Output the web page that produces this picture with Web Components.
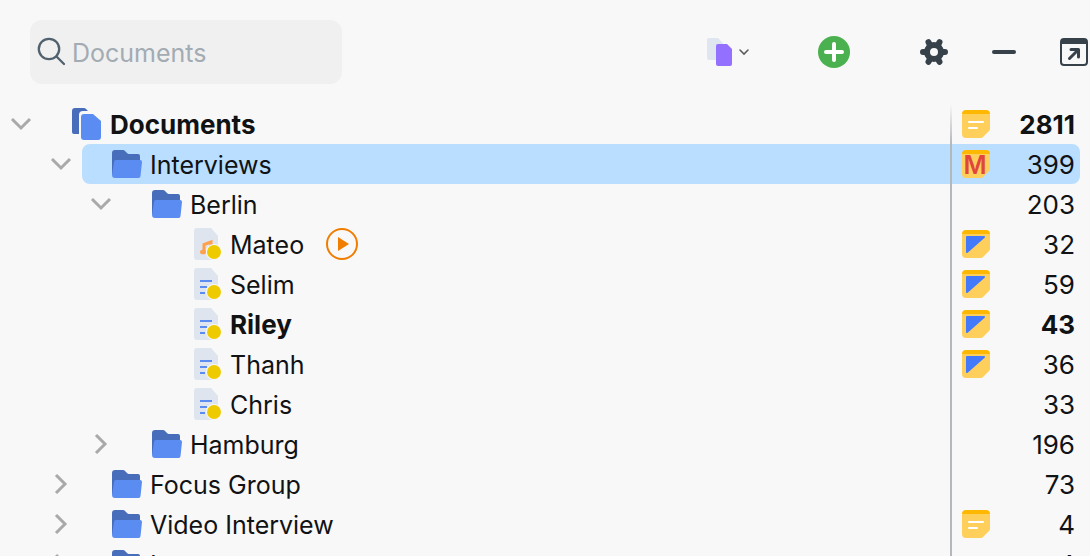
<!DOCTYPE html>
<html lang="en">
<head>
<meta charset="utf-8">
<title>Documents</title>
<style>
  html, body {
    height: 100%;
  }

  body {
    margin: 0;
    overflow: hidden;
    background: #f8f8f8;
    color: #111214;
    font-family: Inter, "Liberation Sans", sans-serif;
    font-size: 25px;
    line-height: 40px;
  }
</style>
</head>
<body>
<document-browser>
  <browser-toolbar slot="toolbar"></browser-toolbar>
  <tree-row level="0" icon="documents" state="open" memo="note" count="2811" strong>Documents</tree-row>
  <tree-row level="1" icon="folder" state="open" memo="letter" count="399" selected>Interviews</tree-row>
  <tree-row level="2" icon="folder" state="open" count="203">Berlin</tree-row>
  <tree-row level="3" icon="audio" memo="corner" count="32" playable>Mateo</tree-row>
  <tree-row level="3" icon="text" memo="corner" count="59">Selim</tree-row>
  <tree-row level="3" icon="text" memo="corner" count="43" strong>Riley</tree-row>
  <tree-row level="3" icon="text" memo="corner" count="36">Thanh</tree-row>
  <tree-row level="3" icon="text" count="33">Chris</tree-row>
  <tree-row level="2" icon="folder" state="closed" count="196">Hamburg</tree-row>
  <tree-row level="1" icon="folder" state="closed" count="73">Focus Group</tree-row>
  <tree-row level="1" icon="folder" state="closed" memo="note" count="4">Video Interview</tree-row>
  <tree-row level="1" icon="folder" state="closed" count="4">I</tree-row>
</document-browser>

<script>
const page = `<path d="M3 0H17L24 8V29a3 3 0 0 1-3 3H3a3 3 0 0 1-3-3V3a3 3 0 0 1 3-3z" fill="#dee5ef"/>`;
const dot = `<circle cx="20" cy="24" r="8" fill="#f8f8f8"/><circle cx="20" cy="24" r="7" fill="#eecb00"/>`;
const note = `
  <path d="M0 4H28V19a3 3 0 0 1-1 2L21 27a3 3 0 0 1-2 1H4a4 4 0 0 1-4-4z" fill="#ffcf5c"/>
  <path d="M0 4a4 4 0 0 1 4-4H24a4 4 0 0 1 4 4z" fill="#ffb800"/>`;

// Each icon: width, height and the shapes inside
const ICONS = {
  search: [30, 30, `<g fill="none" stroke="#52616e" stroke-width="2.3" stroke-linecap="round"><circle cx="11" cy="12" r="10.2"/><path d="M18.500 19.500L26 27"/></g>`],
  activate: [26, 28, `
    <path d="M2 0H11L16 5V20a2 2 0 0 1-2 2H2a2 2 0 0 1-2-2V2a2 2 0 0 1 2-2z" fill="#dfe6ef"/>
    <path d="M11 6H20L25 11V26a2 2 0 0 1-2 2H11a2 2 0 0 1-2-2V8a2 2 0 0 1 2-2z" fill="#9370ff"/>`],
  caret: [12, 8, `<path d="M2 2L6 6L10 2" fill="none" stroke="#5c5c5c" stroke-width="1.6" stroke-linecap="round"/>`],
  add: [32, 32, `<circle cx="16" cy="16" r="16" fill="#4bb150"/><path d="M16 8V24M8 16H24" stroke="#fff" stroke-width="4" stroke-linecap="round"/>`],
  gear: [28, 28, `
    <g stroke="#36414a" stroke-width="6" stroke-linecap="round"><path d="M3 14H25M8.500 4.200L19.500 23.800M19.500 4.200L8.500 23.800"/></g>
    <circle cx="14" cy="14" r="7" fill="#f8f8f8" stroke="#36414a" stroke-width="6"/>`],
  minus: [24, 4, `<path d="M2 2H22" stroke="#36414a" stroke-width="4" stroke-linecap="round"/>`],
  popout: [28, 28, `
    <rect x="1" y="1" width="26" height="26" rx="3" fill="none" stroke="#36414a" stroke-width="2"/>
    <path d="M1 6V3a2 2 0 0 1 2-2H25a2 2 0 0 1 2 2V6z" fill="#36414a"/>
    <path d="M9.500 20.500L18 12M11 11.500H18.500V19" fill="none" stroke="#36414a" stroke-width="3" stroke-linecap="round" stroke-linejoin="round"/>`],
  open: [20, 12, `<path d="M1 1L10 10L19 1" fill="none" stroke="#a9a9a9" stroke-width="3"/>`],
  closed: [12, 20, `<path d="M1 1L10 10L1 19" fill="none" stroke="#a9a9a9" stroke-width="3"/>`],
  documents: [30, 32, `
    <path d="M3 0H12a3 3 0 0 1 2 1L16 3H11a4 4 0 0 0-4 4V26H2a2 2 0 0 1-2-2V3a3 3 0 0 1 3-3z" fill="#486dbb"/>
    <path d="M12 6H21L29 13V29a3 3 0 0 1-3 3H12a3 3 0 0 1-3-3V9a3 3 0 0 1 3-3z" fill="#5b8cf1"/>`],
  folder: [30, 28, `
    <path d="M0 3a3 3 0 0 1 3-3H11a3 3 0 0 1 2 1L15 3a3 3 0 0 0 2 1H26a2 2 0 0 1 2 2V24H0z" fill="#486dbb"/>
    <path d="M4 10H28a2 2 0 0 1 2 2L28.500 26a2 2 0 0 1-2 2H3a3 3 0 0 1-3-3L2 12a2 2 0 0 1 2-2z" fill="#5b8cf1"/>`],
  text: [28, 32, `${page}<path d="M6 13H18M6 19H13M6 25H11" stroke="#5b8cf1" stroke-width="2"/>${dot}`],
  audio: [28, 32, `${page}<path d="M10 24V16.500L17 14V20" fill="none" stroke="#ffa04d" stroke-width="3"/><ellipse cx="9" cy="24" rx="3" ry="2.300" fill="#ffa04d"/>${dot}`],
  play: [32, 32, `<circle cx="16" cy="16" r="15" fill="none" stroke="#f07d00" stroke-width="2"/><path d="M12 9L23 16L12 23z" fill="#f07d00"/>`],
  note: [28, 28, `${note}<path d="M7 12H21M7 18H15" stroke="#fff" stroke-width="2" stroke-linecap="round"/>`],
  letter: [28, 28, note],
  corner: [28, 28, `${note}<path d="M5 7H22L5 22z" fill="#437afb" stroke="#437afb" stroke-width="2" stroke-linejoin="round"/>`]
};

class AppIcon extends HTMLElement {
  constructor() {
    super();
    this.attachShadow({ mode: "open" });
  }

  connectedCallback() {
    const [width, height, shapes] = ICONS[this.getAttribute("name")];
    this.shadowRoot.innerHTML = `
      <style>
        :host {
          display: block;
          flex: none;
        }

        svg {
          display: block;
          overflow: visible;
        }
      </style>
      <svg width="${width}" height="${height}" viewBox="0 0 ${width} ${height}" aria-hidden="true">${shapes}</svg>
    `;
  }
}

customElements.define("app-icon", AppIcon);

class BrowserToolbar extends HTMLElement {
  constructor() {
    super();
    this.attachShadow({ mode: "open" });

    this.shadowRoot.innerHTML = `
      <style>
        :host {
          display: flex;
          align-items: center;
          justify-content: space-between;
          padding: 20px 2px 20px 30px;
        }

        #search {
          display: flex;
          align-items: center;
          gap: 4px;
          box-sizing: border-box;
          width: 312px;
          height: 64px;
          padding: 0 8px;
          border-radius: 12px;
          background: #f0f0f0;
        }

        input {
          flex: 1;
          min-width: 0;
          padding: 2px 0 0;
          border: 0;
          outline: 0;
          background: none;
          color: inherit;
          font: inherit;
        }

        input::placeholder {
          color: #a3abb3;
          opacity: 1;
        }

        #actions {
          display: flex;
          align-items: center;
        }

        button {
          display: flex;
          align-items: center;
          gap: 5px;
          padding: 0;
          border: 0;
          background: none;
        }

        #activate {
          margin-right: 68px;
        }

        #add {
          margin-right: 70px;
        }

        #settings,
        #minimize {
          margin-right: 44px;
        }
      </style>
      <label id="search">
        <app-icon name="search"></app-icon>
        <input type="search" placeholder="Documents" aria-label="Search documents">
      </label>
      <div id="actions">
        <button id="activate" aria-label="Activate documents"><app-icon name="activate"></app-icon><app-icon name="caret"></app-icon></button>
        <button id="add" aria-label="Add"><app-icon name="add"></app-icon></button>
        <button id="settings" aria-label="Settings"><app-icon name="gear"></app-icon></button>
        <button id="minimize" aria-label="Minimize"><app-icon name="minus"></app-icon></button>
        <button id="undock" aria-label="Undock"><app-icon name="popout"></app-icon></button>
      </div>
    `;
  }
}

customElements.define("browser-toolbar", BrowserToolbar);

class TreeRow extends HTMLElement {
  constructor() {
    super();
    this.attachShadow({ mode: "open" });
  }

  connectedCallback() {
    const level = Number(this.getAttribute("level"));
    const icon = this.getAttribute("icon");
    const state = this.getAttribute("state");
    const memo = this.getAttribute("memo");

    this.setAttribute("role", "treeitem");
    this.setAttribute("aria-level", level + 1);

    this.shadowRoot.innerHTML = `
      <style>
        :host {
          display: flex;
          height: 40px;
          padding-right: 10px;
          white-space: nowrap;
        }

        :host([strong]) {
          font-size: 26px;
          font-weight: 700;
        }

        #toggle {
          display: flex;
          align-items: center;
          justify-content: center;
          flex: none;
          width: 42px;
          margin-left: ${level * 40}px;
          padding: 0;
          border: 0;
          background: none;
        }

        #body {
          display: flex;
          align-items: center;
          flex: 1;
          min-width: 0;
          padding-left: 30px;
          border-radius: 8px;
        }

        :host([selected]) #body {
          background: #b9deff;
        }

        #icon {
          flex: none;
          width: 38px;
        }

        :host([level="3"]) #icon {
          box-sizing: border-box;
          padding-left: 2px;
        }

        #label,
        #count {
          padding-top: 2px;
        }

        #play {
          margin-left: 22px;
          padding: 0;
          border: 0;
          background: none;
        }

        #memo {
          position: relative;
          width: 28px;
          margin-left: auto;
        }

        #memo span {
          position: absolute;
          inset: 2px 2px 0 0;
          color: #e0463e;
          font-weight: 600;
          line-height: 26px;
          text-align: center;
        }

        #count {
          box-sizing: border-box;
          width: 90px;
          padding-right: 5px;
          font-size: 26px;
          text-align: right;
        }
      </style>
      ${state ? `<button id="toggle" aria-label="Toggle"><app-icon name="${state}"></app-icon></button>` : `<div id="toggle"></div>`}
      <div id="body">
        <div id="icon"><app-icon name="${icon}"></app-icon></div>
        <div id="label"><slot></slot></div>
        ${this.hasAttribute("playable") ? `<button id="play" aria-label="Play"><app-icon name="play"></app-icon></button>` : ""}
        <div id="memo">${memo ? `<app-icon name="${memo}"></app-icon>` : ""}${memo === "letter" ? "<span>M</span>" : ""}</div>
        <div id="count">${this.getAttribute("count")}</div>
      </div>
    `;
  }
}

customElements.define("tree-row", TreeRow);

class DocumentBrowser extends HTMLElement {
  constructor() {
    super();
    this.attachShadow({ mode: "open" });

    this.shadowRoot.innerHTML = `
      <style>
        :host {
          display: flex;
          flex-direction: column;
          height: 100%;
        }

        #tree {
          position: relative;
          flex: 1;
          min-height: 0;
          overflow: hidden;
        }

        /* column line, drawn over the selected row */
        #tree::after {
          content: "";
          position: absolute;
          top: 0;
          bottom: 0;
          right: 138px;
          width: 2px;
          background: linear-gradient(#b4b7bb00, #b4b7bb 40px);
        }
      </style>
      <slot name="toolbar"></slot>
      <div id="tree" role="tree"><slot></slot></div>
    `;
  }
}

customElements.define("document-browser", DocumentBrowser);
</script>
</body>
</html>
